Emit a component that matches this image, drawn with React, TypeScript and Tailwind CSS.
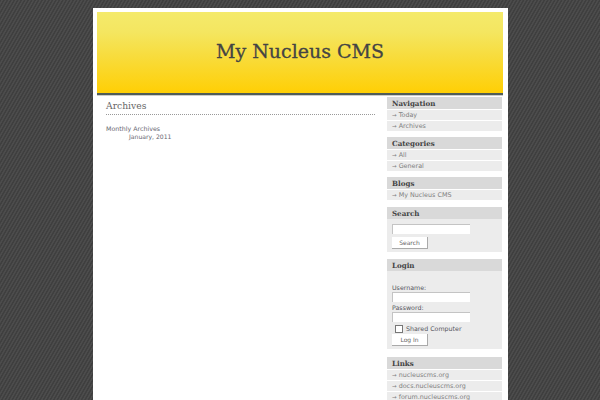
const sans = "font-['DejaVu_Sans',sans-serif]";

function Head({ children }: { children: string }) {
  return (
    <div className="h-[12px] bg-[#d9d9d9] pl-[5px] pt-[1px] font-['DejaVu_Serif',serif] text-[7.1px] leading-[11px] font-bold text-[#444444]">
      {children}
    </div>
  );
}

function Item({ children }: { children: string }) {
  return (
    <div className={`mt-[1px] h-[10px] bg-[#ececec] pl-[5px] text-[6.4px] leading-[10px] text-[#808080] ${sans}`}>
      <span className="text-[5.5px]">→</span> {children}
    </div>
  );
}

function Btn({ children }: { children: string }) {
  return (
    <div className="flex h-[12px] w-[36px] items-center justify-center border-r border-b border-[#aaaaaa] bg-white text-[6px] text-[#666666]">
      {children}
    </div>
  );
}

function Field() {
  return <div className="h-[10px] w-[78px] border-t border-l border-[#c4c4c4] bg-white" />;
}

export default function App() {
  return (
    <div className="h-[400px] w-[600px] overflow-hidden bg-[#464646] bg-[repeating-linear-gradient(120deg,#3f3f3f_0px,#3f3f3f_1px,#4c4c4c_1.5px,#4c4c4c_2.5px,#3f3f3f_3px)] pt-[8px]">
      <div className="ml-[93px] h-[392px] w-[415px] bg-white pl-[4px] pr-[5px] pt-[4px]">
        <div className="flex h-[83px] items-center justify-center border-b-2 border-[#4f5c58] bg-[linear-gradient(#f4ea6b,#f4e660_25%,#f8dc3c_55%,#ffcf05)] pb-[2px] font-['DejaVu_Serif',serif] text-[19px] text-[#444444] [-webkit-text-stroke:0.3px_#444444]">
          My Nucleus CMS
        </div>
        <div className="h-[1px] bg-[#cccccc]" />
        <div className="flex">
          <div className="w-[278px] pl-[9px] pt-[3px]">
            <div className="border-b border-dotted border-[#999999] pb-[2px] font-['DejaVu_Serif',serif] text-[9.2px] leading-[13px] text-[#666666]">
              Archives
            </div>
            <div className={`mt-[10px] text-[6.3px] leading-[8px] font-medium text-[#666670] ${sans}`}>Monthly Archives</div>
            <div className={`pl-[23px] text-[6.1px] leading-[8px] text-[#666670] ${sans}`}>January, 2011</div>
          </div>
          <div className="ml-[12px] w-[115px] pt-[1px]">
            <Head>Navigation</Head>
            <Item>Today</Item>
            <Item>Archives</Item>
            <div className="h-[6px]" />
            <Head>Categories</Head>
            <Item>All</Item>
            <Item>General</Item>
            <div className="h-[6px]" />
            <Head>Blogs</Head>
            <Item>My Nucleus CMS</Item>
            <div className="h-[7px]" />
            <Head>Search</Head>
            <div className={`flex h-[33px] flex-col gap-[3px] bg-[#ececec] pl-[5px] pt-[5px] ${sans}`}>
              <Field />
              <Btn>Search</Btn>
            </div>
            <div className="h-[7px]" />
            <Head>Login</Head>
            <div className={`h-[78px] bg-[#ececec] pl-[5px] pt-[13px] text-[6.3px] leading-[8px] text-[#555560] ${sans}`}>
              <div>Username:</div>
              <Field />
              <div className="mt-[2px]">Password:</div>
              <Field />
              <div className="mt-[3px] flex h-[8px] items-center pl-[3px]">
                <div className="h-[8px] w-[8px] border border-[#777777] bg-white" />
                <span className="ml-[3px]">Shared Computer</span>
              </div>
              <div className="mt-[1px]"><Btn>Log In</Btn></div>
            </div>
            <div className="h-[8px]" />
            <Head>Links</Head>
            <Item>nucleuscms.org</Item>
            <Item>docs.nucleuscms.org</Item>
            <Item>forum.nucleuscms.org</Item>
          </div>
        </div>
      </div>
    </div>
  );
}
